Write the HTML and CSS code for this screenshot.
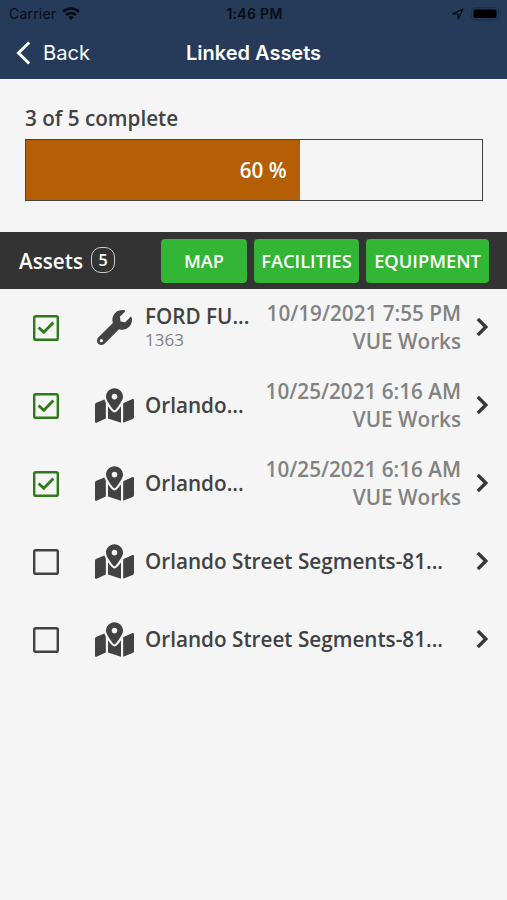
FILE: index.html
```html
<!DOCTYPE html>
<html lang="en">
<head>
<meta charset="utf-8">
<title>Linked Assets</title>
<link rel="stylesheet" href="styles.css">
</head>
<body>
<svg class="defs" aria-hidden="true">
  <symbol id="wrench" viewBox="0 0 512 512"><path d="M507.73 109.1c-2.24-9.03-13.54-12.09-20.12-5.51l-74.36 74.36-67.88-11.31-11.31-67.88 74.36-74.36c6.62-6.62 3.43-17.9-5.66-20.16-47.38-11.74-99.55.91-136.58 37.93-39.64 39.64-50.55 97.1-34.05 147.2L18.74 402.76c-24.99 24.99-24.99 65.51 0 90.5 24.99 24.99 65.51 24.99 90.5 0l213.21-213.21c50.12 16.71 107.47 5.68 147.37-34.22 37.07-37.07 49.7-89.32 37.91-136.73zM64 472c-13.25 0-24-10.75-24-24 0-13.26 10.75-24 24-24s24 10.74 24 24c0 13.25-10.75 24-24 24z"/></symbol>
  <symbol id="map" viewBox="0 0 576 512"><path d="M288 0c-69.59 0-126 56.41-126 126 0 56.26 82.35 158.8 113.9 196.02 6.39 7.54 17.82 7.54 24.2 0C331.65 284.8 414 182.26 414 126 414 56.41 357.59 0 288 0zm0 168c-23.2 0-42-18.8-42-42s18.8-42 42-42 42 18.8 42 42-18.8 42-42 42zM20.12 215.95A32.006 32.006 0 0 0 0 245.66v250.32c0 11.32 11.43 19.06 21.94 14.86L160 448V214.92c-8.84-15.98-16.07-31.54-21.25-46.42L20.12 215.95zM288 359.67c-14.07 0-27.38-6.18-36.51-16.96-19.66-23.2-40.57-49.62-59.49-76.72v182l192 64V266c-18.92 27.09-39.82 53.52-59.49 76.72-9.13 10.77-22.44 16.95-36.51 16.95zm266.06-198.51L416 224v288l139.88-55.95A31.996 31.996 0 0 0 576 426.34V176.02c0-11.32-11.43-19.06-21.94-14.86z"/></symbol>
  <symbol id="box" viewBox="0 0 26 26"><rect x="1.2" y="1.2" width="23.6" height="23.6" rx="1.6" fill="none" stroke="currentColor" stroke-width="2.4"/></symbol>
  <symbol id="tick" viewBox="0 0 26 26"><rect x="1.2" y="1.2" width="23.6" height="23.6" rx="1.6" fill="none" stroke="currentColor" stroke-width="2.4"/><path d="M5.600 12.500l5.200 4.800 9.600-9.800" fill="none" stroke="currentColor" stroke-width="2.8"/></symbol>
  <symbol id="next" viewBox="0 0 12 20"><path d="M1.800 2l8 8-8 8" fill="none" stroke="currentColor" stroke-width="3.300"/></symbol>
</svg>
<header class="top">
  <div class="status">
    <div class="carrier"><span>Carrier</span>
      <svg class="wifi" viewBox="0 0 18 13"><g fill="none" stroke="currentColor" stroke-width="2.7"><path d="M1 4.800a11.400 11.400 0 0 1 16 0"/><path d="M4 8.100a7.100 7.100 0 0 1 10 0"/></g><path d="M9 13L6.300 10.300a3.800 3.800 0 0 1 5.400 0z" fill="currentColor"/></svg>
    </div>
    <span class="clock">1:46 PM</span>
    <div class="power">
      <svg class="location" viewBox="0 0 12 12"><path d="M.9 5.800L11 1 6.300 11.100 6 6z" fill="none" stroke="currentColor" stroke-width="1.200" stroke-linejoin="round"/></svg>
      <svg class="battery" viewBox="0 0 31 14"><rect x=".6" y=".6" width="26.800" height="12.300" rx="3.800" fill="none" stroke="#1e2f4c" stroke-width="1.200"/><rect x="2.500" y="2.500" width="23" height="8.500" rx="2"/><path d="M29 4.500q1.800 2.300 0 4.600z" fill="#1e2f4c"/></svg>
    </div>
  </div>
  <nav class="nav">
    <a class="back"><svg viewBox="0 0 15 24"><path d="M13.200 1.500L2.500 12l10.700 10.500" fill="none" stroke="currentColor" stroke-width="3"/></svg><span>Back</span></a>
    <h1>Linked Assets</h1>
    <span></span>
  </nav>
</header>
<section class="progress">
  <p>3 of 5 complete</p>
  <div class="track"><div class="fill" style="width:60%">60 %</div></div>
</section>
<div class="toolbar">
  <span class="heading">Assets</span><span class="count">5</span>
  <div class="filters"><button class="map">MAP</button><button class="fac">FACILITIES</button><button class="equ">EQUIPMENT</button></div>
</div>
<main>
  <div class="row done"><svg class="check"><use href="#tick"/></svg><svg class="icon wrench"><use href="#wrench"/></svg>
    <div class="name"><div class="title">FORD FU...</div><div class="sub">1363</div></div>
    <div class="meta"><span class="date">10/19/2021 7:55 PM</span><span>VUE Works</span></div><svg class="next"><use href="#next"/></svg></div>
  <div class="row done"><svg class="check"><use href="#tick"/></svg><svg class="icon"><use href="#map"/></svg>
    <div class="name"><div class="title">Orlando...</div></div>
    <div class="meta"><span class="date">10/25/2021 6:16 AM</span><span>VUE Works</span></div><svg class="next"><use href="#next"/></svg></div>
  <div class="row done"><svg class="check"><use href="#tick"/></svg><svg class="icon"><use href="#map"/></svg>
    <div class="name"><div class="title">Orlando...</div></div>
    <div class="meta"><span class="date">10/25/2021 6:16 AM</span><span>VUE Works</span></div><svg class="next"><use href="#next"/></svg></div>
  <div class="row"><svg class="check"><use href="#box"/></svg><svg class="icon"><use href="#map"/></svg>
    <div class="name"><div class="title">Orlando Street Segments-81...</div></div><svg class="next"><use href="#next"/></svg></div>
  <div class="row"><svg class="check"><use href="#box"/></svg><svg class="icon"><use href="#map"/></svg>
    <div class="name"><div class="title">Orlando Street Segments-81...</div></div><svg class="next"><use href="#next"/></svg></div>
</main>
</body>
</html>
```
FILE: styles.css
```css
* { box-sizing: border-box; }
body { margin: 0; height: 900px; overflow: hidden; background: #f5f5f5; color: #424242; font: 600 20.7px/28px "Open Sans", sans-serif; }
svg { display: block; flex: none; fill: currentColor; }
.defs { display: none; }
.top { height: 79px; background: #263a5a; font-family: Inter, sans-serif; }
.status { display: grid; grid-template-columns: 1fr auto 1fr; align-items: center; height: 27px; padding: 0 7px 0 9px; color: #080c14; font-size: 14px; font-weight: 400; line-height: 26px; }
.carrier { display: flex; align-items: center; gap: 6px; letter-spacing: .2px; }
.wifi { width: 18px; height: 13px; }
.clock { font-weight: 600; letter-spacing: .3px; }
.power { display: flex; justify-content: flex-end; align-items: center; gap: 7px; }
.location { width: 12px; height: 12px; }
.battery { width: 31px; height: 14px; color: #000; margin-right: -2px; }
.nav { display: grid; grid-template-columns: 1fr auto 1fr; align-items: center; height: 51px; padding: 0 16px; color: #fff; }
.back { display: flex; align-items: center; gap: 12px; font-size: 20.2px; font-weight: 400; }
.back svg { width: 15px; height: 24px; }
.nav h1 { margin: 0; font-size: 20px; font-weight: 600; }
.progress { height: 153px; padding: 25px 24px 0 25px; }
.progress p { margin: 0 0 7px; line-height: 28px; }
.track { height: 62px; border: 1.5px solid #444; }
.fill { display: flex; align-items: center; justify-content: flex-end; height: 100%; padding-right: 13px; background: #b45f06; color: #fff; }
.toolbar { display: flex; align-items: center; height: 57px; padding: 0 18px 0 19px; background: #333; color: #fff; }
.count { display: grid; place-items: center; width: 24px; height: 26px; margin-left: 8px; border: 1.5px solid #ccc; border-radius: 10px; font-size: 16px; line-height: 20px; position: relative; top: -1px; }
.filters { display: flex; gap: 7px; margin-left: auto; }
.filters button { height: 44px; padding: 0; border: 0; border-radius: 4px; background: #33b535; color: #fff; font: 600 18.3px "Open Sans", sans-serif; }
.filters .map { width: 86px; }
.filters .fac { width: 105px; }
.filters .equ { width: 123px; }
.row { display: flex; align-items: center; height: 78px; padding: 0 19px 0 33px; }
.check { width: 26px; height: 26px; margin-right: 36px; }
.done .check { color: #2c7a18; }
.icon { width: 39px; height: 35px; margin-right: 11px; margin-top: -2px; }
.icon.wrench { width: 35px; margin-left: 2px; margin-right: 13px; }
.name { flex: 1; min-width: 0; margin-top: -2px; white-space: nowrap; }
.title { line-height: 28px; }
.sub { color: #828282; font-size: 17px; font-weight: 500; line-height: 20px; }
.wrench + .name { margin-top: -4px; }
.meta { display: flex; flex-direction: column; align-items: flex-end; margin-top: -2px; color: #828282; white-space: nowrap; }
.next { width: 12px; height: 20px; margin: -2px 0 0 15px; color: #383838; }
```
